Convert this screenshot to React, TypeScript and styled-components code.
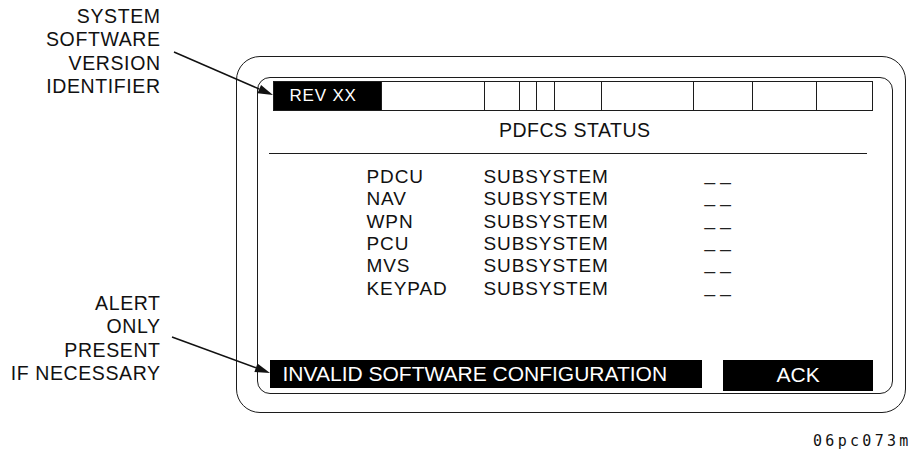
import styled, { createGlobalStyle } from 'styled-components';

const GlobalStyle = createGlobalStyle`
  html, body {
    margin: 0;
    padding: 0;
    background: #ffffff;
  }
  body {
    font-family: "Liberation Sans", Arial, sans-serif;
    color: #111;
    overflow: hidden;
  }
`;

const Page = styled.div`
  position: relative;
  width: 909px;
  height: 452px;
  display: flex;
  overflow: hidden;
`;

const LabelColumn = styled.div`
  width: 160px;
  margin-right: 76px;
  display: flex;
  flex-direction: column;
`;

const Callout = styled.div<{ $top: number }>`
  margin-top: ${(p) => p.$top}px;
  text-align: right;
  font-size: 19.5px;
  line-height: 23.3px;
  letter-spacing: 0.6px;
  margin-right: -0.6px;
`;

const RightColumn = styled.div`
  width: 673px;
  display: flex;
  flex-direction: column;
`;

const OuterFrame = styled.div`
  margin-top: 56px;
  width: 670px;
  height: 357px;
  box-sizing: border-box;
  border: 1.5px solid #1c1c1c;
  border-radius: 24px;
  padding: 19.5px 12.5px 18.5px 19.5px;
`;

const Screen = styled.div`
  height: 100%;
  box-sizing: border-box;
  border: 1.5px solid #1c1c1c;
  border-radius: 13px;
  padding: 3.5px 18.5px 2px 15px;
  display: flex;
  flex-direction: column;
`;

const HeaderBar = styled.div`
  display: flex;
  height: 30px;
  box-sizing: border-box;
  border: 1.5px solid #1c1c1c;
`;

const HeaderCell = styled.div<{ $w: number; $dark?: boolean }>`
  width: ${(p) => p.$w}px;
  box-sizing: border-box;
  border-right: 1.5px solid #1c1c1c;
  background: ${(p) => (p.$dark ? '#000' : '#fff')};
  color: #fff;
  font-size: 17px;
  letter-spacing: 0.8px;
  padding-left: 16px;
  display: flex;
  align-items: center;
  &:last-child {
    border-right: none;
  }
`;

const Title = styled.div`
  margin-top: 8px;
  text-align: center;
  font-size: 19.5px;
  line-height: 23.3px;
  letter-spacing: 0.5px;
  padding-left: 4px;
`;

const Rule = styled.div`
  margin: 10.5px 6px 0 -4px;
  border-top: 1.5px solid #1c1c1c;
`;

const Rows = styled.div`
  margin-top: 12px;
  padding-left: 94px;
  display: grid;
  grid-template-columns: 117px 221px 40px;
  grid-auto-rows: 22.4px;
  font-size: 19px;
  line-height: 22.4px;
  letter-spacing: 0.9px;
`;

const Dashes = styled.div`
  align-self: start;
  line-height: 16px;
  letter-spacing: 0;
  white-space: pre;
  color: #222;
`;

const AlertBar = styled.div`
  margin-top: auto;
  margin-left: -3px;
  display: flex;
  gap: 21px;
  align-items: flex-start;
`;

const AlertBox = styled.div<{ $w: number; $h: number; $center?: boolean }>`
  width: ${(p) => p.$w}px;
  height: ${(p) => p.$h}px;
  background: #000;
  color: #fff;
  font-size: 21px;
  display: flex;
  align-items: center;
  justify-content: ${(p) => (p.$center ? 'center' : 'flex-start')};
  padding-left: ${(p) => (p.$center ? 0 : 13)}px;
  box-sizing: border-box;
`;

const FigureCode = styled.div`
  margin-top: 20px;
  padding-left: 577px;
  white-space: nowrap;
  font-family: "DejaVu Sans Mono", "Liberation Mono", monospace;
  font-size: 15px;
  line-height: 16px;
  letter-spacing: 3.3px;
`;

const Overlay = styled.svg`
  position: absolute;
  left: 0;
  top: 0;
  pointer-events: none;
`;

const headerCells = [103, 35, 17, 18, 47, 92, 59, 64, 55];

const subsystems = ['PDCU', 'NAV', 'WPN', 'PCU', 'MVS', 'KEYPAD'];

function Arrow({ x1, y1, x2, y2 }: { x1: number; y1: number; x2: number; y2: number }) {
  const dx = x2 - x1;
  const dy = y2 - y1;
  const len = Math.hypot(dx, dy);
  const ux = dx / len;
  const uy = dy / len;
  const bx = x2 - ux * 15;
  const by = y2 - uy * 15;
  const px = -uy * 4.5;
  const py = ux * 4.5;
  return (
    <g>
      <line x1={x1} y1={y1} x2={bx} y2={by} stroke="#111" strokeWidth={1.5} />
      <polygon points={`${x2},${y2} ${bx + px},${by + py} ${bx - px},${by - py}`} fill="#111" />
    </g>
  );
}

export default function App() {
  return (
    <>
      <GlobalStyle />
      <Page>
        <LabelColumn>
          <Callout $top={5}>
            SYSTEM
            <br />
            SOFTWARE
            <br />
            VERSION
            <br />
            IDENTIFIER
          </Callout>
          <Callout $top={194}>
            ALERT
            <br />
            ONLY
            <br />
            PRESENT
            <br />
            IF NECESSARY
          </Callout>
        </LabelColumn>
        <RightColumn>
          <OuterFrame>
            <Screen>
              <HeaderBar>
                <HeaderCell $w={109} $dark>
                  REV XX
                </HeaderCell>
                {headerCells.map((w, i) => (
                  <HeaderCell key={i} $w={w} />
                ))}
              </HeaderBar>
              <Title>PDFCS STATUS</Title>
              <Rule />
              <Rows>
                {subsystems.map((name) => (
                  <>
                    <div key={name}>{name}</div>
                    <div>SUBSYSTEM</div>
                    <Dashes>_ _</Dashes>
                  </>
                ))}
              </Rows>
              <AlertBar>
                <AlertBox $w={433} $h={28}>
                  INVALID SOFTWARE CONFIGURATION
                </AlertBox>
                <AlertBox $w={150} $h={31} $center>
                  ACK
                </AlertBox>
              </AlertBar>
            </Screen>
          </OuterFrame>
          <FigureCode>06pc073m</FigureCode>
        </RightColumn>
        <Overlay width={909} height={452}>
          <Arrow x1={174} y1={52} x2={273} y2={95} />
          <Arrow x1={172} y1={337} x2={270} y2={373} />
        </Overlay>
      </Page>
    </>
  );
}
